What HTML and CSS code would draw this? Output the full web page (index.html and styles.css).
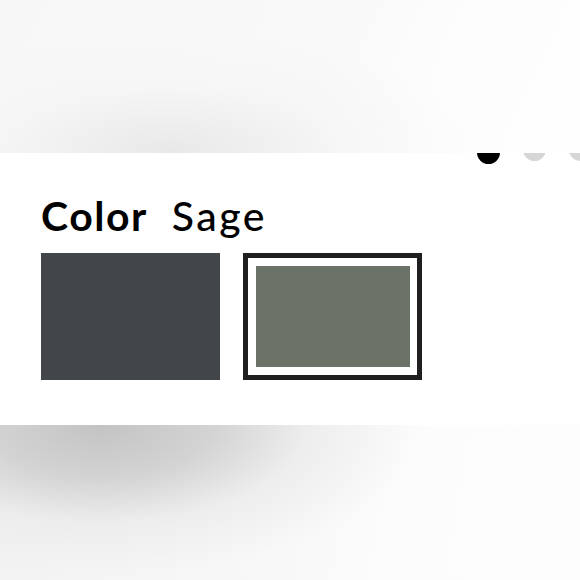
FILE: index.html
```html
<!DOCTYPE html>
<html lang="en">
<head>
<meta charset="utf-8">
<link rel="stylesheet" href="styles.css">
</head>
<body>
<div class="page">
  <div class="hero"></div>
  <section class="panel">
    <div class="dots">
      <span class="dot dot-active"></span>
      <span class="dot"></span>
      <span class="dot"></span>
    </div>
    <h2 class="heading"><span class="label">Color</span><span class="value">Sage</span></h2>
    <div class="swatches">
      <button class="swatch"><span class="chip chip-charcoal"></span></button>
      <button class="swatch swatch-selected"><span class="chip chip-sage"></span></button>
    </div>
  </section>
  <div class="footer"></div>
</div>
</body>
</html>
```

FILE: styles.css
```css
html, body {
  margin: 0;
  padding: 0;
  background: #ffffff;
}

.page {
  width: 580px;
  height: 580px;
  overflow: hidden;
  display: flex;
  flex-direction: column;
  font-family: Lato, "Noto Sans", sans-serif;
}

.hero {
  height: 153px;
  flex: none;
  position: relative;
  z-index: 2;
  background:
    radial-gradient(ellipse 320px 120px at 170px 153px, #e8e8e8 0%, rgba(244,244,244,0.6) 55%, rgba(250,250,250,0) 100%),
    linear-gradient(115deg, #f7f7f7 0%, #f9f9f9 55%, #fdfdfd 75%, #fefefe 100%);
}

.panel {
  height: 272px;
  flex: none;
  position: relative;
  background: #ffffff;
  padding: 41px 0 0 41px;
  box-sizing: border-box;
}

.dots {
  position: absolute;
  top: -12px;
  left: 477px;
  display: flex;
  gap: 23px;
  align-items: flex-start;
}

.dot {
  width: 23px;
  height: 23px;
  border-radius: 50%;
  background: #d6d6d6;
  margin-top: -3px;
}

.dot-active {
  background: #000000;
  margin-top: 0;
}

.heading {
  margin: 0;
  display: flex;
  gap: 24px;
  font-size: 41px;
  line-height: 44px;
  letter-spacing: 1.5px;
  color: #000000;
}

.label {
  font-weight: 700;
}

.value {
  font-weight: 500;
  letter-spacing: 2.5px;
}

.swatches {
  display: flex;
  gap: 23px;
  margin-top: 15px;
}

.swatch {
  width: 179px;
  height: 127px;
  padding: 0;
  margin: 0;
  border: 0;
  background: transparent;
  display: flex;
  box-sizing: border-box;
}

.swatch-selected {
  border: 5px solid #1f1f1f;
  padding: 8px 7px 8px 8px;
}

.chip {
  flex: 1;
  display: block;
}

.chip-charcoal {
  background: #42454a;
}

.chip-sage {
  background: #6b7268;
}

.footer {
  flex: 1;
  background:
    radial-gradient(ellipse 320px 150px at 100px 0px, #c3c3c3 0%, #d3d3d3 35%, rgba(235,235,235,0.8) 65%, rgba(250,250,250,0) 100%),
    linear-gradient(100deg, #f2f2f2 0%, #f8f8f8 50%, #fcfcfc 70%, #fdfdfd 100%);
}
```
